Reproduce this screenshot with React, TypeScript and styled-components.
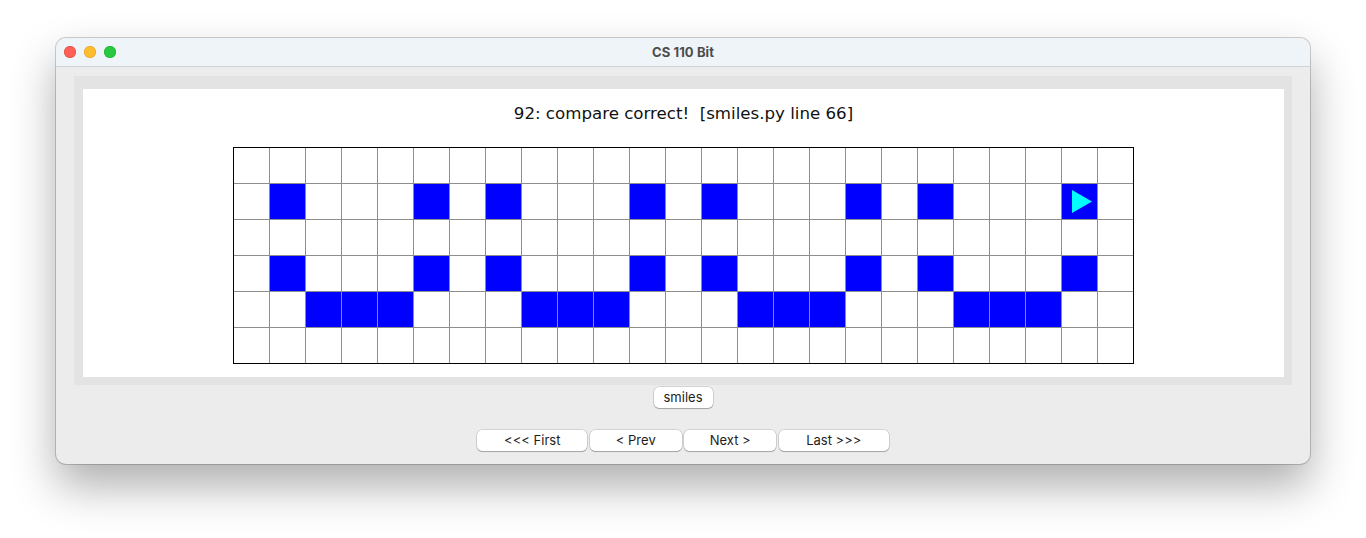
import React from "react";
import styled, { createGlobalStyle } from "styled-components";

const Global = createGlobalStyle`
  html, body { margin: 0; padding: 0; background: #ffffff; }
  body { font-family: Inter, "Liberation Sans", Arial, sans-serif; }
`;

const Page = styled.div`
  padding: 38px 56px 0 56px;
  height: 538px;
  box-sizing: border-box;
  overflow: hidden;
`;

const Window = styled.div`
  width: 1254px;
  height: 426px;
  box-sizing: border-box;
  border-radius: 10px;
  background: #ececec;
  box-shadow: 0 0 0 1px rgba(0, 0, 0, 0.18), 0 22px 45px rgba(0, 0, 0, 0.32);
  overflow: hidden;
  display: flex;
  flex-direction: column;
`;

const TitleBar = styled.div`
  position: relative;
  height: 28px;
  flex: none;
  background: #eff4f8;
  border-bottom: 1px solid #cfd2d5;
  display: flex;
  align-items: center;
  justify-content: center;
`;

const Lights = styled.div`
  position: absolute;
  left: 8px;
  top: 8px;
  display: flex;
  gap: 8px;
`;

const Light = styled.span<{ $c: string; $b: string }>`
  width: 12px;
  height: 12px;
  border-radius: 50%;
  background: ${(p) => p.$c};
  box-shadow: inset 0 0 0 0.5px ${(p) => p.$b};
`;

const Title = styled.div`
  font-family: Inter, "Liberation Sans", Arial, sans-serif;
  font-weight: 700;
  font-size: 13px;
  color: #4c4c4c;
  letter-spacing: 0.1px;
`;

const Body = styled.div`
  flex: 1;
  display: flex;
  flex-direction: column;
  align-items: center;
  padding: 9px 18px 12px 18px;
`;

const Panel = styled.div`
  align-self: stretch;
  background: #e3e3e3;
  padding: 13px 8px 8px 9px;
`;

const Canvas = styled.div`
  background: #ffffff;
  height: 288px;
  box-sizing: border-box;
  padding-top: 14px;
  display: flex;
  flex-direction: column;
  align-items: center;
`;

const Message = styled.div`
  font-family: "DejaVu Sans", Verdana, sans-serif;
  font-size: 16.65px;
  line-height: 22px;
  color: #111;
  white-space: pre;
`;

const Board = styled.div`
  margin-top: 22px;
  display: grid;
  grid-template-columns: repeat(25, 35px);
  grid-template-rows: repeat(6, 35px);
  gap: 1px;
  background: #8e8e8e;
  border: 1px solid #000;
`;

const Cell = styled.div<{ $on: boolean }>`
  background: ${(p) => (p.$on ? "#0000ff" : "#ffffff")};
  position: relative;
`;

const Arrow = styled.svg`
  display: block;
  width: 35px;
  height: 35px;
`;

const Btn = styled.button<{ $w: number }>`
  width: ${(p) => p.$w}px;
  height: 21px;
  padding: 0;
  border: none;
  border-radius: 5px;
  background: #ffffff;
  box-shadow: 0 0 0 0.5px rgba(0, 0, 0, 0.22), 0 1px 1px rgba(0, 0, 0, 0.22);
  font-family: Inter, "Liberation Sans", Arial, sans-serif;
  font-size: 13px;
  color: #1d1d1d;
  line-height: 21px;
`;

const SmilesRow = styled.div`
  margin-top: 2px;
  display: flex;
  justify-content: center;
`;

const NavRow = styled.div`
  margin-top: 22px;
  display: flex;
  gap: 2.5px;
  justify-content: center;
`;

const blue: Record<number, number[]> = {
  1: [1, 5, 7, 11, 13, 17, 19, 23],
  3: [1, 5, 7, 11, 13, 17, 19, 23],
  4: [2, 3, 4, 8, 9, 10, 14, 15, 16, 20, 21, 22],
};

export default function App() {
  const cells: React.ReactNode[] = [];
  for (let r = 0; r < 6; r++) {
    for (let c = 0; c < 25; c++) {
      const on = (blue[r] || []).includes(c);
      const arrow = r === 1 && c === 23;
      cells.push(
        <Cell key={`${r}-${c}`} $on={on}>
          {arrow && (
            <Arrow viewBox="0 0 35 35">
              <polygon points="10,6 30,17.5 10,29" fill="#00ffff" />
            </Arrow>
          )}
        </Cell>
      );
    }
  }
  return (
    <>
      <Global />
      <Page>
        <Window>
          <TitleBar>
            <Lights>
              <Light $c="#fe5f57" $b="#e14640" />
              <Light $c="#febc2e" $b="#dfa023" />
              <Light $c="#28c840" $b="#1dad2b" />
            </Lights>
            <Title>CS 110 Bit</Title>
          </TitleBar>
          <Body>
            <Panel>
              <Canvas>
                <Message>92: compare correct!  [smiles.py line 66]</Message>
                <Board>{cells}</Board>
              </Canvas>
            </Panel>
            <SmilesRow>
              <Btn $w={59}>smiles</Btn>
            </SmilesRow>
            <NavRow>
              <Btn $w={110}>{"<<< First"}</Btn>
              <Btn $w={92}>{"< Prev"}</Btn>
              <Btn $w={92}>{"Next >"}</Btn>
              <Btn $w={110}>{"Last >>>"}</Btn>
            </NavRow>
          </Body>
        </Window>
      </Page>
    </>
  );
}
